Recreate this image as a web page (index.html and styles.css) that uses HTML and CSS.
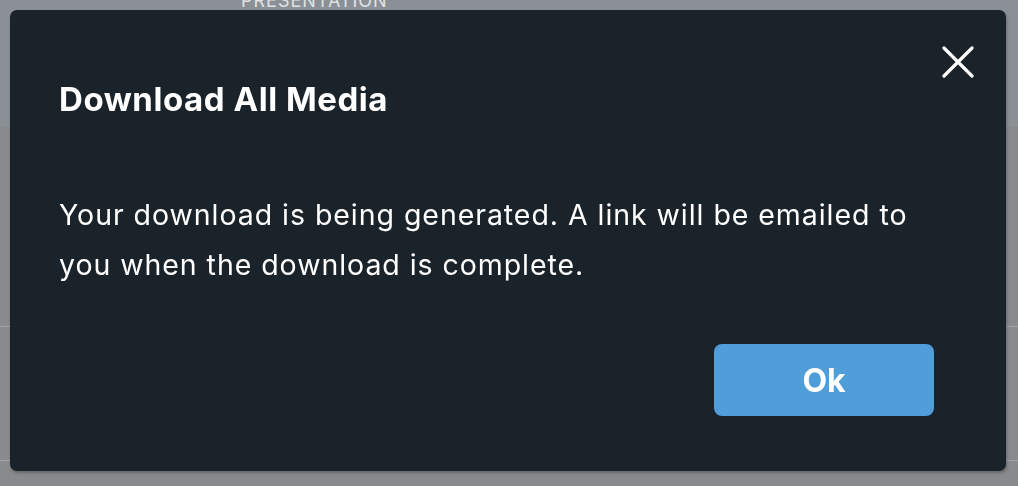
FILE: index.html
```html
<!DOCTYPE html>
<html lang="en">
<head>
  <meta charset="UTF-8">
  <title>Download All Media</title>
  <link rel="stylesheet" href="styles.css">
</head>
<body>

  <!-- page behind the overlay -->
  <div class="page">
    <div class="topbar">
      <span class="topbar-label">PRESENTATION</span>
    </div>
    <div class="list-row row-one"></div>
    <div class="list-row row-two"></div>
  </div>

  <!-- Modal -->
  <div class="modal">
    <button class="modal-close" aria-label="Close">
      <svg width="32" height="32" viewBox="0 0 32 32">
        <path d="M2 2 L30 30 M30 2 L2 30" stroke="#fff" stroke-width="3.2" stroke-linecap="round" fill="none"/>
      </svg>
    </button>
    <h2 class="modal-title">Download All Media</h2>
    <p class="modal-text">Your download is being generated. A link will be emailed to you when the download is complete.</p>
    <div class="modal-footer">
      <button class="btn-ok">Ok</button>
    </div>
  </div>

</body>
</html>
```

FILE: styles.css
```css
body {
  margin: 0;
  font-family: Inter, "Noto Sans", sans-serif;
  background: #888b8b;
  overflow: hidden;
}
.page {
  height: 486px;
}
.topbar {
  height: 127px;
  background: #8b9097;
  overflow: hidden;
}
.topbar-label {
  display: block;
  margin: -10px 0 0 241px;
  font-size: 18px;
  letter-spacing: 1px;
  color: #dfe2e5;
}
.list-row {
  border-bottom: 1px solid #a2a5a5;
}
.row-one {
  height: 199px;
}
.row-two {
  height: 133px;
}
.modal {
  position: fixed;
  left: 10px;
  top: 10px;
  width: 996px;
  height: 461px;
  box-sizing: border-box;
  padding: 69px 72px 0 49px;
  background: #1b232a;
  border-radius: 7px;
  box-shadow: 1px 2px 3px rgba(0, 0, 0, 0.25);
  color: #fff;
}
.modal-close {
  position: absolute;
  top: 36px;
  right: 32px;
  width: 32px;
  height: 32px;
  padding: 0;
  border: 0;
  background: none;
}
.modal-title {
  margin: 0;
  font-size: 33px;
  line-height: 40px;
  font-weight: 700;
  letter-spacing: 0.55px;
}
.modal-text {
  margin: 71px 0 0;
  font-size: 28.5px;
  line-height: 50px;
  letter-spacing: 0.95px;
}
.modal-footer {
  display: flex;
  justify-content: flex-end;
  margin-top: 54px;
}
.btn-ok {
  width: 220px;
  height: 72px;
  border: 0;
  border-radius: 8px;
  background: #4f9dd9;
  color: #fff;
  font-family: inherit;
  font-size: 32px;
  font-weight: 700;
}
```
